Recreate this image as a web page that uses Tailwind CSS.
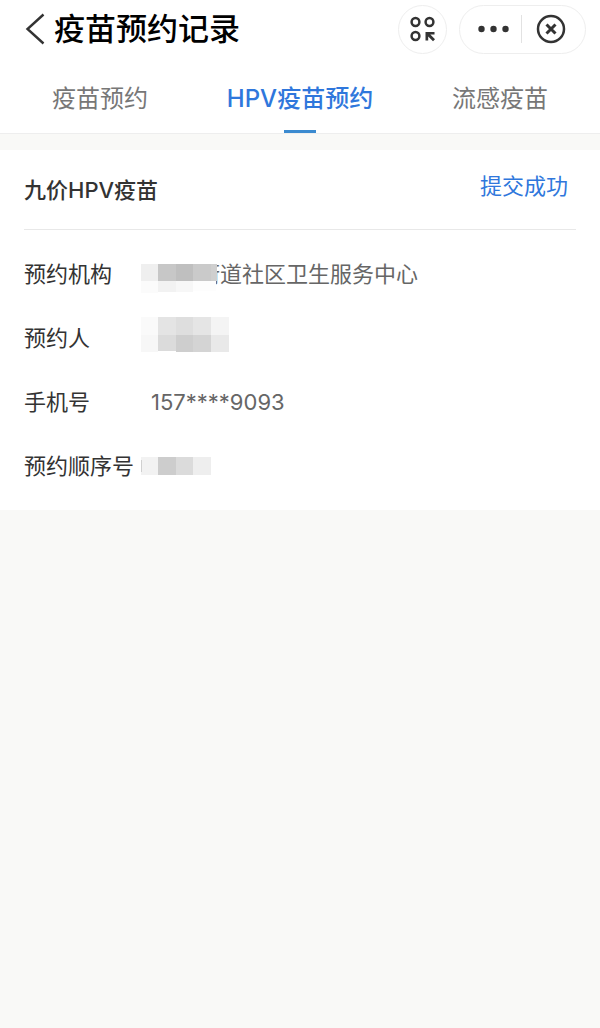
<!DOCTYPE html>
<html lang="zh-CN">
<head>
    <meta charset="UTF-8">
    <meta name="viewport" content="width=device-width, initial-scale=1.0">
    <title>疫苗预约记录</title>
    <script src="https://cdn.jsdelivr.net/npm/@tailwindcss/browser@4"></script>
</head>
<body class="min-h-screen bg-[#f9f9f7] font-['Inter','Noto_Sans_CJK_SC',sans-serif] text-[#333]">

    <!-- Top bar -->
    <header class="flex items-center bg-white h-[58px] pl-6 pr-[14px]">
        <button type="button" aria-label="返回" class="mr-1">
            <svg class="w-[26px] h-8" viewBox="0 0 26 32" fill="none" stroke="#333" stroke-width="2.4">
                <path d="M19.5 1.5L3.5 16L19.5 30.5"/>
            </svg>
        </button>
        <h1 class="text-[31px] leading-[58px] font-medium text-black">疫苗预约记录</h1>

        <div class="ml-auto flex items-center gap-3">
            <button type="button" aria-label="小程序" class="size-[49px] rounded-full border border-[#eee] flex items-center justify-center">
                <svg class="size-[26px]" viewBox="0 0 26 26" fill="none" stroke="#333" stroke-width="2.5">
                    <circle cx="5.5" cy="6" r="3.9"/>
                    <circle cx="19.5" cy="6" r="3.9"/>
                    <circle cx="5.5" cy="20" r="3.9"/>
                    <path d="M15.5 16H24.5V18.6H20.3L25 23.3L23 25.3L18.2 20.6V24.6H15.5Z" fill="#333" stroke="none"/>
                </svg>
            </button>
            <div class="h-[49px] w-[127px] rounded-full border border-[#eee] flex items-center">
                <button type="button" aria-label="更多" class="flex-1 flex justify-center pl-1">
                    <svg class="w-8 h-2" viewBox="0 0 32 8" fill="#333">
                        <circle cx="4.5" cy="4" r="3.2"/>
                        <circle cx="16.5" cy="4" r="3.2"/>
                        <circle cx="28.5" cy="4" r="3.2"/>
                    </svg>
                </button>
                <span class="w-px h-7 bg-[#e2e2e2]"></span>
                <button type="button" aria-label="关闭" class="flex-1 flex justify-center pr-1.5">
                    <svg class="size-[30px]" viewBox="0 0 30 30" fill="none" stroke="#333">
                        <circle cx="15" cy="15" r="13" stroke-width="2.5"/>
                        <path d="M10.5 10.5L19.5 19.5M19.5 10.5L10.5 19.5" stroke-width="3"/>
                    </svg>
                </button>
            </div>
        </div>
    </header>

    <!-- Tabs -->
    <nav class="grid grid-cols-3 bg-white border-b border-[#eee] text-2xl text-center text-[#777]">
        <a href="#" class="h-[75px] pt-[25px]">疫苗预约</a>
        <a href="#" aria-current="page" class="relative h-[75px] pt-[25px] font-medium text-[#2f77dc]">
            HPV疫苗预约
            <span class="absolute bottom-0 left-1/2 -translate-x-1/2 w-8 h-[3px] bg-[#3b8ad0]"></span>
        </a>
        <a href="#" class="h-[75px] pt-[25px]">流感疫苗</a>
    </nav>

    <!-- Record card -->
    <main class="mt-4 bg-white px-6 pb-3 text-[22px]">
        <div class="flex justify-between border-b border-[#e8e8e8] h-20 pr-2">
            <h2 class="leading-[80px] font-medium">九价HPV疫苗</h2>
            <span class="leading-[72px] text-[#2f77dc]">提交成功</span>
        </div>

        <dl class="pt-3 leading-[64px]">
            <div class="flex">
                <dt class="w-[117px]">预约机构</dt>
                <dd class="relative pl-[57px] text-[#666]">
                    街道社区卫生服务中心
                    <!-- masked street name -->
                    <svg class="absolute left-0 top-4 w-[77px] h-[35px]" viewBox="0 0 77 35" shape-rendering="crispEdges">
                        <rect width="75" height="35" fill="#fff"/>
                        <rect y="6" width="17" height="17" fill="#efefef"/>
                        <rect x="17" y="6" width="18" height="17" fill="#c7c7c7"/>
                        <rect x="35" y="6" width="17" height="17" fill="#bfbfbf"/>
                        <rect x="52" y="6" width="18" height="17" fill="#cacaca"/>
                        <rect x="70" y="6" width="6" height="17" fill="#cfcfcf"/>
                        <rect y="23" width="17" height="12" fill="#fbfbfb"/>
                        <rect x="17" y="23" width="18" height="11" fill="#f2f2f2"/>
                        <rect x="35" y="23" width="17" height="11" fill="#f7f7f7"/>
                        <rect x="52" y="23" width="23" height="10" fill="#fdfdfd"/>
                    </svg>
                </dd>
            </div>
            <div class="flex">
                <dt class="w-[117px]">预约人</dt>
                <dd class="flex items-center">
                    <svg class="w-[88px] h-9 mb-1.5" viewBox="0 0 88 36" shape-rendering="crispEdges">
                        <rect width="17" height="18" fill="#fafafa"/>
                        <rect x="17" width="18" height="18" fill="#e4e4e4"/>
                        <rect x="35" width="17" height="18" fill="#dedede"/>
                        <rect x="52" width="18" height="18" fill="#e5e5e5"/>
                        <rect x="70" width="18" height="18" fill="#f4f4f4"/>
                        <rect y="18" width="17" height="17" fill="#f7f7f7"/>
                        <rect x="17" y="18" width="18" height="16" fill="#dbdbdb"/>
                        <rect x="35" y="18" width="17" height="17" fill="#cecece"/>
                        <rect x="52" y="18" width="18" height="17" fill="#d4d4d4"/>
                        <rect x="70" y="18" width="18" height="17" fill="#e9e9e9"/>
                    </svg>
                </dd>
            </div>
            <div class="flex">
                <dt class="w-[117px]">手机号</dt>
                <dd class="pl-[10px] text-[#666]">157****9093</dd>
            </div>
            <div class="flex">
                <dt class="w-[117px]">预约顺序号</dt>
                <dd class="flex items-center">
                    <svg class="w-[70px] h-[18px]" viewBox="0 0 70 18" shape-rendering="crispEdges">
                        <rect width="17" height="18" fill="#f2f2f2"/>
                        <rect y="3" width="1" height="12" fill="#d0d0d0"/>
                        <rect x="17" width="18" height="18" fill="#cdcdcd"/>
                        <rect x="35" width="17" height="18" fill="#dbdbdb"/>
                        <rect x="52" width="18" height="18" fill="#eeeeee"/>
                    </svg>
                </dd>
            </div>
        </dl>
    </main>

</body>
</html>
